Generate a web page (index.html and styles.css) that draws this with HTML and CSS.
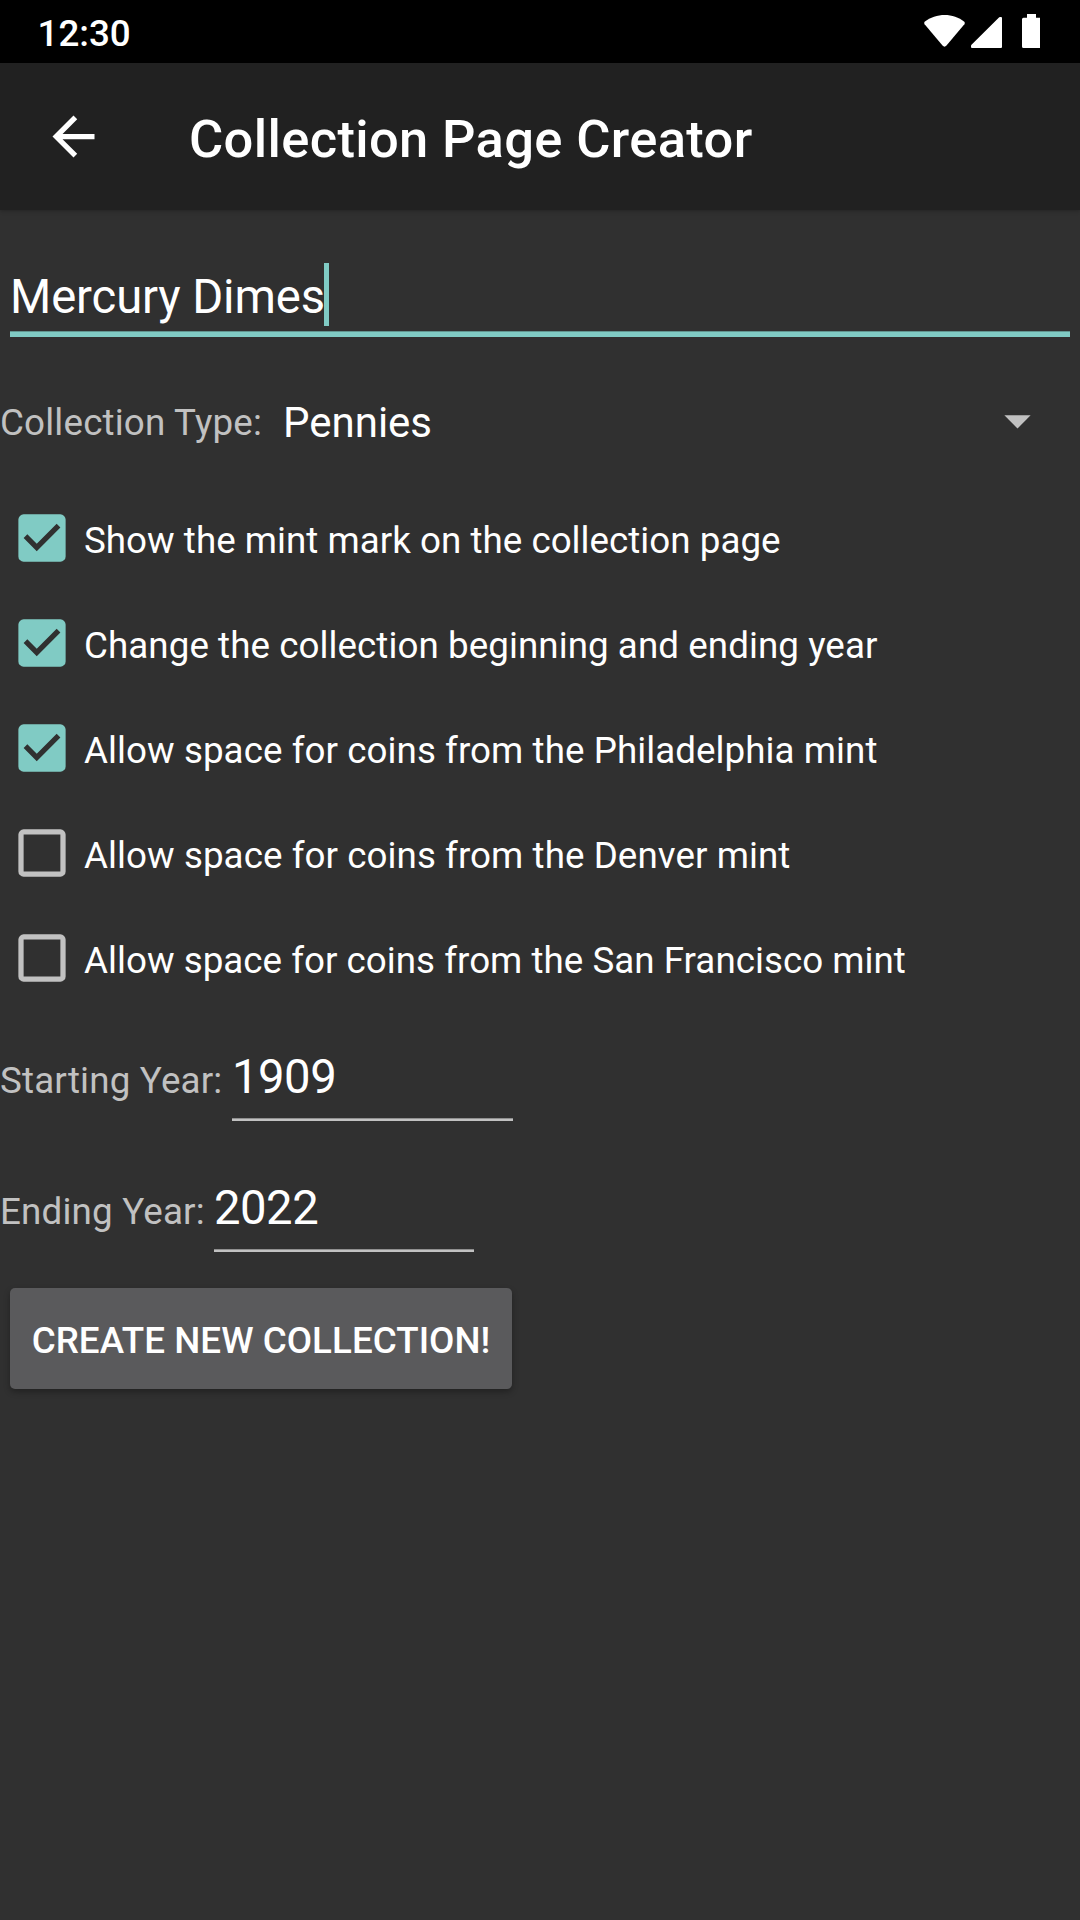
FILE: index.html
```html
<!DOCTYPE html>
<html lang="en">
<head>
<meta charset="utf-8">
<title>Collection Page Creator</title>
<link rel="stylesheet" href="styles.css">
</head>
<body>
<div class="status">
  <span class="time">12:30</span>
  <svg class="status-icons" width="120" height="63" viewBox="0 0 120 63" fill="#fff">
    <path d="M4.6 21.8C16 12.8 33.500 12.800 44.300 21.800Q45.400 23 44.400 24.200L26.500 45.600Q24.500 47.700 22.500 45.600L4.600 24.200Q3.700 23 4.600 21.800z"/>
    <path d="M80 17H81Q82 17 82 18V47Q82 48 81 48H52Q51 48 51 47V46Q51 45 52 44.200L78.700 17.700Q79.300 17 80 17z"/>
    <path d="M107 14h9v3.800h3.500q1.500 0 1.500 1.500v27.200q0 1.500-1.500 1.500h-16q-1.500 0-1.500-1.500V19.300q0-1.500 1.500-1.500H107z"/>
  </svg>
</div>
<header class="bar">
  <svg class="back" width="63" height="63" viewBox="0 0 24 24" fill="#fff"><path d="M20 11H7.830l5.590-5.590L12 4l-8 8 8 8 1.410-1.410L7.830 13H20v-2z"/></svg>
  <h1 class="title">Collection Page Creator</h1>
</header>
<main class="form">
  <div class="name-field"><span class="name-text">Mercury Dimes</span><span class="cursor"></span></div>
  <div class="type-row">
    <span class="label type-label">Collection Type:</span>
    <span class="type-value">Pennies</span>
    <svg class="caret" width="63" height="63" viewBox="0 0 24 24" fill="#c1c1c1"><path d="M7 10l5 5 5-5z"/></svg>
  </div>
  <div class="checks">
    <div class="check"><svg class="box on" viewBox="-0.19 -0.19 24.38 24.38"><path d="M19 3H5a2 2 0 0 0-2 2v14a2 2 0 0 0 2 2h14a2 2 0 0 0 2-2V5a2 2 0 0 0-2-2zm-9 14l-5-5 1.410-1.410L10 14.170l7.590-7.590L19 8l-9 9z"/></svg><span class="check-text snug">Show the mint mark on the collection page</span></div>
    <div class="check"><svg class="box on" viewBox="-0.19 -0.19 24.38 24.38"><path d="M19 3H5a2 2 0 0 0-2 2v14a2 2 0 0 0 2 2h14a2 2 0 0 0 2-2V5a2 2 0 0 0-2-2zm-9 14l-5-5 1.410-1.410L10 14.170l7.590-7.590L19 8l-9 9z"/></svg><span class="check-text">Change the collection beginning and ending year</span></div>
    <div class="check"><svg class="box on" viewBox="-0.19 -0.19 24.38 24.38"><path d="M19 3H5a2 2 0 0 0-2 2v14a2 2 0 0 0 2 2h14a2 2 0 0 0 2-2V5a2 2 0 0 0-2-2zm-9 14l-5-5 1.410-1.410L10 14.170l7.590-7.590L19 8l-9 9z"/></svg><span class="check-text">Allow space for coins from the Philadelphia mint</span></div>
    <div class="check"><svg class="box" viewBox="-0.19 -0.19 24.38 24.38"><path d="M19 5v14H5V5h14m0-2H5a2 2 0 0 0-2 2v14a2 2 0 0 0 2 2h14a2 2 0 0 0 2-2V5a2 2 0 0 0-2-2z"/></svg><span class="check-text">Allow space for coins from the Denver mint</span></div>
    <div class="check"><svg class="box" viewBox="-0.19 -0.19 24.38 24.38"><path d="M19 5v14H5V5h14m0-2H5a2 2 0 0 0-2 2v14a2 2 0 0 0 2 2h14a2 2 0 0 0 2-2V5a2 2 0 0 0-2-2z"/></svg><span class="check-text snug">Allow space for coins from the San Francisco mint</span></div>
  </div>
  <div class="year-row">
    <span class="label year-label start">Starting Year:</span>
    <span class="year start-year">1909</span>
  </div>
  <div class="year-row">
    <span class="label year-label end">Ending Year:</span>
    <span class="year end-year">2022</span>
  </div>
  <button class="create">CREATE NEW COLLECTION!</button>
</main>
</body>
</html>
```
FILE: styles.css
```css
* { box-sizing: border-box; }

body {
  margin: 0;
  width: 1080px;
  height: 1920px;
  overflow: hidden;
  background: #303030;
  color: #fff;
  font-family: Roboto, sans-serif;
  font-size: 36.75px;
}

svg { display: block; flex: none; }
span { white-space: nowrap; }

.status {
  display: flex;
  justify-content: space-between;
  height: 63px;
  padding: 0 39px 0 37.5px;
  background: #000;
}
.time { font-weight: 500; line-height: 67px; }
.status-icons { margin-right: 1px; }

.bar {
  display: flex;
  align-items: center;
  height: 147px;
  padding-left: 42px;
  background: #212121;
  box-shadow: 0 1px 4px rgba(0, 0, 0, 0.25);
}
.title {
  margin: 4px 0 0 84px;
  font-size: 52.5px;
  font-weight: 500;
  line-height: 60px;
  letter-spacing: 0.34px;
}

.name-field {
  display: flex;
  height: 127px;
  margin: 0 10px;
  padding-top: 53px;
  border-bottom: 5px solid #80cbc4;
  box-shadow: inset 0 -1px #619590;
  font-size: 47.25px;
}
.name-text { width: 314px; line-height: 68px; letter-spacing: -0.12px; }
.cursor { width: 5px; height: 63px; background: #80cbc4; }

.label { color: #c1c1c1; letter-spacing: 0.18px; }

.type-row {
  display: flex;
  align-items: center;
  height: 149px;
  padding: 22px 31px 0 0;
}
.type-label { width: 283px; }
.type-value { flex: 1; font-size: 42px; }
.caret { margin-top: -4px; }

.check { display: flex; height: 105px; padding: 20px 0 0 10px; }
.box { width: 64px; height: 64px; fill: #c1c1c1; }
.on { fill: #80cbc4; }
.check-text { margin-left: 10px; line-height: 69px; letter-spacing: 0.06px; }
.snug { letter-spacing: 0.02px; }

.year-row { display: flex; align-items: flex-start; height: 131px; }
.year-label { padding-top: 41px; line-height: 58px; }
.start { width: 232px; }
.end { width: 214px; }
.year {
  height: 110px;
  padding-top: 36px;
  border-bottom: 2px solid #c1c1c1;
  box-shadow: inset 0 -1px #8f8f8f;
  font-size: 47.25px;
  line-height: 60px;
  letter-spacing: -0.5px;
}
.start-year { width: 281px; }
.end-year { width: 260px; }

.create {
  display: block;
  width: 502px;
  height: 101px;
  margin: 15px 0 0 10px;
  padding: 4px 0 0;
  border: 0;
  border-radius: 5px;
  background: #5a5a5c;
  color: #fff;
  font: 500 36.75px/60px Roboto, sans-serif;
  letter-spacing: 0.04px;
  box-shadow: 0 3px 6px rgba(0, 0, 0, 0.3);
}
```
